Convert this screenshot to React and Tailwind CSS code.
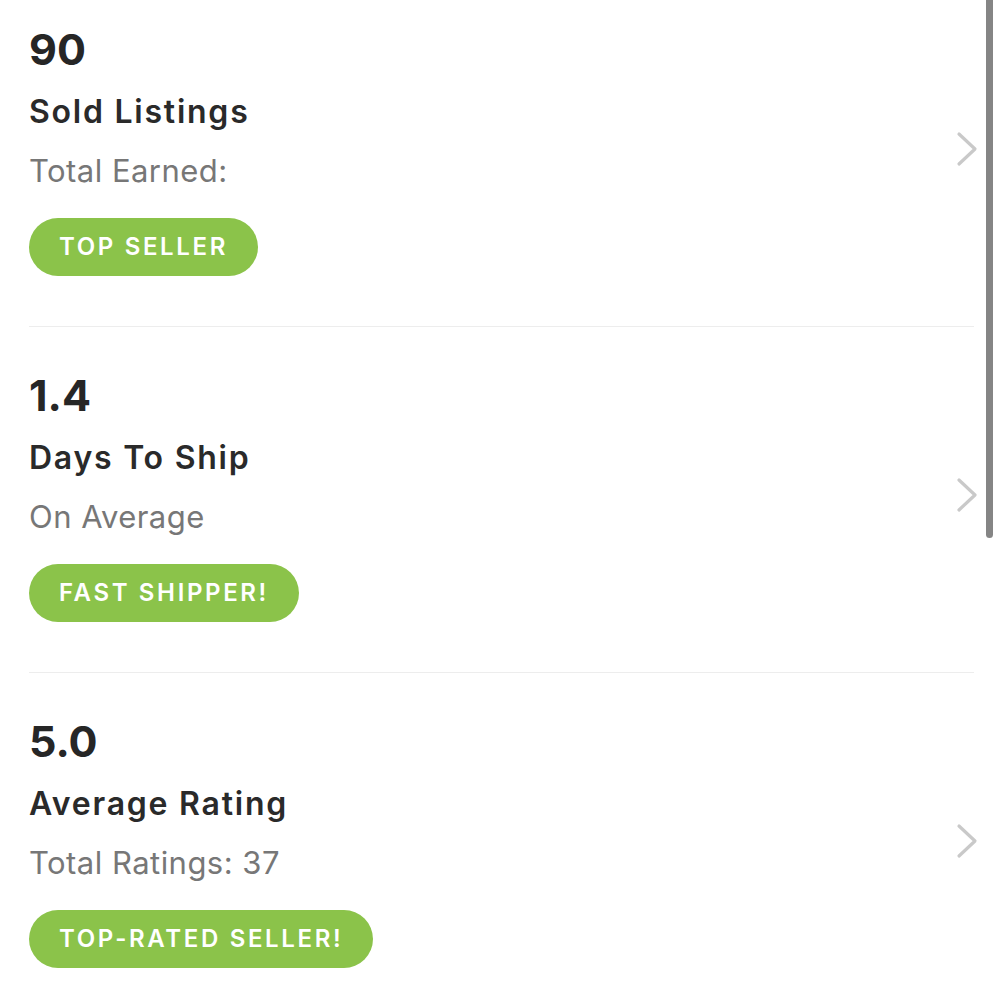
const stats = [
  {
    value: "90",
    title: "Sold Listings",
    sub: "Total Earned:",
    badge: "TOP SELLER",
  },
  {
    value: "1.4",
    title: "Days To Ship",
    sub: "On Average",
    badge: "FAST SHIPPER!",
  },
  {
    value: "5.0",
    title: "Average Rating",
    sub: "Total Ratings: 37",
    badge: "TOP-RATED SELLER!",
  },
];

function Chevron() {
  return (
    <svg width="22" height="36" viewBox="0 0 22 36" fill="none" className="-mr-[4px]">
      <polyline
        points="3,3 19,18 3,33"
        stroke="#c9c9c9"
        strokeWidth="3.2"
        strokeLinecap="round"
        strokeLinejoin="round"
      />
    </svg>
  );
}

export default function App() {
  return (
    <div
      className="relative h-[1000px] w-[1000px] overflow-hidden bg-white"
      style={{ fontFamily: "Inter, 'Open Sans', sans-serif" }}
    >
      {/* Stat rows */}
      <div className="pl-[29px] pr-[26px]">
        {stats.map((s, i) => (
          <div
            key={s.title}
            className={
              "flex items-center justify-between border-b border-[#ededed] pb-[50px] " +
              (i === 0 ? "pt-[21px]" : "pt-[40px]")
            }
          >
            <div className="flex flex-col items-start">
              <div className="text-[43px] font-bold leading-[56px] text-[#262626]">
                {s.value}
              </div>
              <div className="mt-[15px] text-[32px] font-semibold leading-[40px] tracking-[0.055em] text-[#2a2a2a]">
                {s.title}
              </div>
              <div className="mt-[20px] text-[31px] leading-[38px] tracking-[0.015em] text-[#777777]">
                {s.sub}
              </div>
              <div className="mt-[28px] flex h-[58px] items-center rounded-full bg-[#8bc34a] px-[30px] text-[24px] font-semibold tracking-[0.11em] text-white">
                {s.badge}
              </div>
            </div>
            <Chevron />
          </div>
        ))}
      </div>

      {/* Scrollbar */}
      <div className="absolute right-[7px] top-0 h-[538px] w-[7px] rounded-b-full bg-[#858585]" />
    </div>
  );
}
